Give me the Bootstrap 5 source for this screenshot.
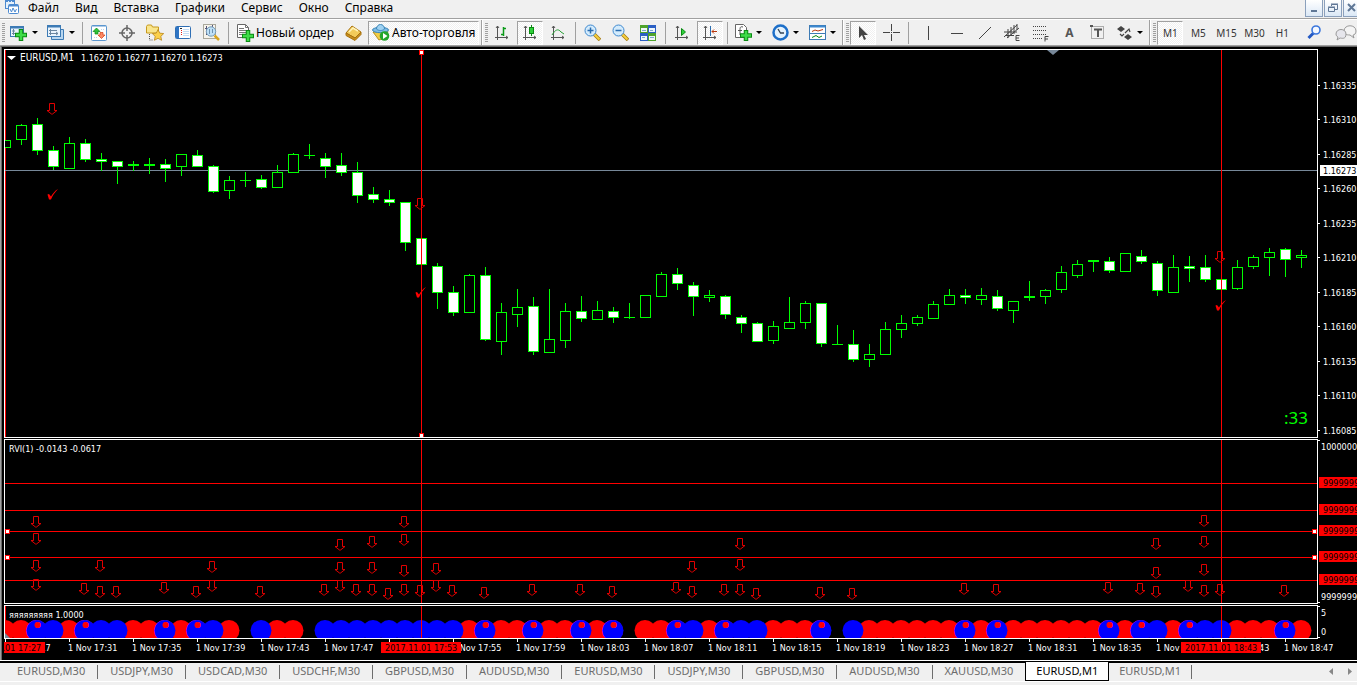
<!DOCTYPE html>
<html lang="ru">
<head>
<meta charset="utf-8">
<meta name="viewport" content="width=device-width, initial-scale=1">
<title>EURUSD,M1</title>
<link href="https://cdn.jsdelivr.net/npm/bootstrap@5.3.0/dist/css/bootstrap.min.css" rel="stylesheet">
<style>
body{background:#f0f0f0;color:#000;font:12px/16px "Noto Sans","Open Sans",sans-serif;overflow-x:hidden}
button{border:0;background:none;padding:0;color:inherit;font:inherit;white-space:nowrap}
svg{display:block;flex:none}
.menubar{height:18px;padding-left:5px}
.menubar .entry{padding:0 8px}
.winbtns{gap:1px;margin-right:-4px}
.wbtn{width:18px;height:17px;border:1px solid #8ba0bc;border-top:0;background:linear-gradient(#fff,#dbe8f6);display:flex;align-items:center;justify-content:center}
.toolbar{height:28px;border-top:1px solid #a0a0a0;border-bottom:1px solid #a0a0a0;box-shadow:inset 0 1px #fff;padding:1px 0 0 2px;overflow:hidden}
.tool{width:28px;height:24px;flex:none;display:flex;align-items:center;justify-content:center;border:1px solid transparent}
.tool.menu-tool{width:37px;gap:4px}
.tool.wide{width:auto;gap:2px;padding:0 4px}
.pressed{border-color:#a0a0a0 #fff #fff #a0a0a0;background:repeating-conic-gradient(#f0f0f0 0 25%,#fff 0 50%) 0 0/2px 2px;width:26px;margin:0 1px}
.tool.wide.pressed{padding:0 3px}
.caret{width:0;height:0;border:3px solid transparent;border-top-color:#000;border-bottom:0}
.rule{width:6px;flex:none;height:22px;background:linear-gradient(#a0a0a0,#a0a0a0) 3px 0/1px 100% no-repeat}
.grip{width:3px;height:20px;flex:none;background:repeating-linear-gradient(#a0a0a0 0 1px,#f0f0f0 1px 2px)}
.edge{width:4px;height:26px;flex:none;border-left:1px solid #a0a0a0;box-shadow:inset 1px 0 #fff;margin-left:1px}
.draw-tools{padding-left:4px}
.end-tools{gap:4px;padding-left:4px}
.tf{color:#333;font-size:10px}
.letter{font:bold 12px/14px "Noto Sans",sans-serif;color:#555}
.chartwin{border-left:1px solid #a0a0a0;border-top:1px solid #696969;background:#000;padding:2px 0 1px 3px;box-shadow:inset 1px 0 #696969}
.pane+.pane{margin-top:1px}
.plot{border:1px solid #fff;flex:1 1 0;min-width:0;width:0}
.scale{width:39px}
.chartwin svg text{font-family:"DejaVu Sans Condensed","DejaVu Sans",sans-serif;font-size:9px;fill:#fff;white-space:pre}
.chartwin svg text.sym{font-size:10px}
.chartwin svg text.ink{fill:#000}
.chartwin svg text.timer{font:17px/20px "Noto Sans",sans-serif;fill:#0f0}
.tabstrip{height:22px;border-top:1px solid #fff;box-shadow:inset 0 2px #000;padding:2px 0 0 5px;font-size:11px;color:#6d6d6d;border-bottom:1px solid #fff}
.tabstrip .tabbtn{height:14px;margin:2px 0;padding:0 12px 3px;border-right:1px solid #6d6d6d;line-height:11px}
.tabstrip .tabbtn.on{height:19px;margin:-1px 0 0 -1px;background:#fff;color:#000;border:1px solid #000;border-top:0;padding:0 10px 2px}
.tabstrip .tabbtn.on+.tabbtn{padding:0 10px 3px}
.scroller{gap:14px;padding-right:4px}
</style>
</head>
<body class="d-flex flex-column min-vh-100">
<header>
<nav class="menubar d-flex align-items-start" aria-label="Меню">
<svg width="15" height="15" viewBox="0 0 15 15" fill="none" stroke="#4d8ad0"><rect x=".5" y=".5" width="9" height="8" fill="#e6f1fb"/><path d="M1 1.500h8" stroke-dasharray="2 1"/><rect x="3.500" y="4.500" width="10" height="9" rx="1" fill="#fff"/><path d="M4 5.500h9" stroke-width="2"/><path d="M5 9l1.500 3 1.500-4 2 4 1.500-3"/></svg>
<button class="entry">Файл</button><button class="entry">Вид</button><button class="entry">Вставка</button><button class="entry">Графики</button><button class="entry">Сервис</button><button class="entry">Окно</button><button class="entry">Справка</button>
<div class="winbtns d-flex ms-auto">
<button class="wbtn" aria-label="Свернуть"><svg width="10" height="10"><path d="M2 7h6v2H2z" fill="#5f7796"/></svg></button>
<button class="wbtn" aria-label="Восстановить"><svg width="10" height="10" fill="none" stroke="#5f7796"><path d="M3.500 3V1.500h6v5H7M3 1h7" /><path d="M.5 4.500h6v4h-6zM0 4h7"/></svg></button>
<button class="wbtn" aria-label="Закрыть"><svg width="10" height="10"><path d="M1 1l7 7M8 1l-7 7" stroke="#5f7796" stroke-width="2"/></svg></button>
</div>
</nav>
<div class="toolbar d-flex align-items-center" role="toolbar" aria-label="Инструменты">
<span class="grip"></span>
<button class="tool menu-tool" aria-label="Новый график"><svg width="18" height="18"><rect x=".5" y="2.500" width="13" height="10" fill="#eaf4fd" stroke="#3d7bb5"/><path d="M1 3.500h12" stroke="#3d7bb5" stroke-width="2"/><path d="M3.500 5v6M2 9.500h5M2 7h3" stroke="#6b86a0"/><path d="M5 11h12M11 5v12" stroke="#0a8a12" stroke-width="4.500"/><path d="M6 11h10M11 6v10" stroke="#3fdc48" stroke-width="2.500"/></svg><span class="caret"></span></button>
<button class="tool menu-tool" aria-label="Профили"><svg width="18" height="18" stroke="#3d7bb5"><path d="M4.500 5.500h12v10h-12z" fill="#b9d6ef"/><rect x=".5" y="1.500" width="13" height="11" fill="#eaf4fd"/><path d="M1 2.500h12" stroke-width="2"/><path d="M3.500 5v6M2 9.500h9M9 8l2 1.500-2 1.500M2 6.500h8" stroke="#6b86a0" fill="none"/></svg><span class="caret"></span></button>
<span class="rule"></span>
<button class="tool" aria-label="Обзор рынка"><svg width="16" height="16"><rect x=".5" y=".5" width="15" height="15" rx="1" fill="#fff" stroke="#5b96cf"/><path d="M1 1h14" stroke="#5b96cf"/><path d="M3 12.500h4M10 4.500h4" stroke="#bcd3ea" stroke-dasharray="1 1"/><path d="M5.500 3L9 6.500H7V9H4V6.500H2z" fill="#2fc23e" stroke="#0a8a12" stroke-width=".7"/><path d="M10.500 13.500L7 10h2V7.500h3V10h2z" fill="#fb8a66" stroke="#d43c12" stroke-width=".7"/></svg></button>
<button class="tool" aria-label="Окно данных"><svg width="16" height="16" fill="none" stroke="#666"><circle cx="8" cy="8" r="5" stroke-width="1.500"/><path d="M8 0v6M8 10v6M0 8h6M10 8h6" stroke-width="1.500"/></svg></button>
<button class="tool" aria-label="Навигатор"><svg width="18" height="18"><path d="M.5 2.500l1-1.500h4l1 2h6v6H.5z" fill="#f9e58c" stroke="#c79a1e"/><path d="M3.500 10v6h4" stroke="#555" fill="none" stroke-dasharray="1 1"/><path d="M12 5.500l1.700 3.600 4 .5-2.900 2.700.8 4-3.600-2-3.600 2 .8-4-2.900-2.700 4-.5z" fill="#fbd04a" stroke="#b9851a" stroke-width=".8"/></svg></button>
<button class="tool" aria-label="Терминал"><svg width="16" height="16"><rect x=".5" y="1.500" width="15" height="12" rx="1" fill="#fff" stroke="#2f6fb5"/><path d="M1 2h3v11H1z" fill="#2f75c4"/><path d="M5 3.500h2" stroke="#222"/><path d="M6 5.500h1M6 7.500h1M6 9.500h1" stroke="#d22"/><path d="M8 4.500h6M8 6.500h6M8 8.500h6M8 10.500h6" stroke="#c3dcf5"/></svg></button>
<button class="tool" aria-label="Тестер"><svg width="18" height="18"><rect x="1.500" y=".5" width="12" height="14" fill="#f7f4ec" stroke="#aaa89c"/><path d="M4.500 2v9M3 4.500h3M10.500 1v4" stroke="#557"/><circle cx="9" cy="7.500" r="4.700" fill="#bfe0f7" stroke="#7499b5"/><path d="M7.500 5v5M10.500 5v4" stroke="#6d93b3"/><path d="M12.500 11.500L17 16" stroke="#d9a520" stroke-width="2.500"/></svg></button>
<span class="rule"></span>
<button class="tool wide"><svg width="18" height="18"><path d="M1.500.5h8l3 3v10h-11z" fill="#fff" stroke="#666"/><path d="M9.500.5v3h3M3 4.500h5M3 6.500h7M3 8.500h7M3 10.500h4" stroke="#777" fill="none"/><path d="M6 12h12M12 6v12" stroke="#0a8a12" stroke-width="4.500"/><path d="M7 12h10M12 7v10" stroke="#3fdc48" stroke-width="2.500"/></svg>Новый ордер</button>
<button class="tool" aria-label="MetaEditor"><svg width="17" height="16"><path d="M1 8l6-7 9 6-6 6z" fill="#f3cb5a" stroke="#a8720e"/><path d="M1 8v2.500l9 5 6-6V7l-6 6z" fill="#c98f1c" stroke="#a8720e"/><path d="M4 7l4-4 5 3" stroke="#fff3b8" fill="none" stroke-width="1.500"/></svg></button>
<button class="tool wide pressed"><svg width="18" height="18"><path d="M1 8l6 8 7-3 2-6z" fill="#f2cd46" stroke="#b8901d"/><ellipse cx="8.500" cy="6" rx="8" ry="2.700" fill="#7fbde6" stroke="#3c86b8"/><path d="M4.500 5c0-6 8-6 8 0-2 2-6 2-8 0" fill="#9fd2f2" stroke="#3c86b8"/><circle cx="12.500" cy="12" r="4.800" fill="#22a62c"/><path d="M11 9l4.500 3-4.500 3z" fill="#fff"/></svg>Авто-торговля</button>
<span class="edge"></span><span class="grip"></span>
<button class="tool" aria-label="Бары"><svg width="16" height="16" fill="none" stroke="#555"><path d="M3.500 1v14M1 12.500h13M2 3l1.500-2L5 3M12 11l2 1.500-2 1.500"/><path d="M9.500 2v9M7 9.500h2M10 3.500h2" stroke="#0a9a18" stroke-width="1.500"/></svg></button>
<button class="tool pressed" aria-label="Свечи"><svg width="16" height="16" fill="none" stroke="#555"><path d="M3.500 1v14M1 12.500h13M2 3l1.500-2L5 3M12 11l2 1.500-2 1.500"/><path d="M9.500 0v11" stroke="#0a8a12"/><rect x="7.500" y="2.500" width="4" height="6" fill="#2fd03a" stroke="#0a8a12"/></svg></button>
<button class="tool" aria-label="Линия"><svg width="16" height="16" fill="none" stroke="#555"><path d="M3.500 1v14M1 12.500h13M2 3l1.500-2L5 3M12 11l2 1.500-2 1.500"/><path d="M2 10c3-5 6-7 9-3l3 2" stroke="#27a035"/></svg></button>
<span class="rule"></span>
<button class="tool" aria-label="Увеличить"><svg width="17" height="17"><path d="M9.500 9.500L16 16" stroke="#a67a12" stroke-width="3.500"/><path d="M10 10l5.500 5.500" stroke="#f5cf3e" stroke-width="2"/><circle cx="6.500" cy="6.500" r="5.500" fill="#d3ebfc" stroke="#3d88cf"/><path d="M3.500 6.500h6M6.500 3.500v6" stroke="#2a6cb0" stroke-width="1.500"/></svg></button>
<button class="tool" aria-label="Уменьшить"><svg width="17" height="17"><path d="M9.500 9.500L16 16" stroke="#a67a12" stroke-width="3.500"/><path d="M10 10l5.500 5.500" stroke="#f5cf3e" stroke-width="2"/><circle cx="6.500" cy="6.500" r="5.500" fill="#d3ebfc" stroke="#3d88cf"/><path d="M3.500 6.500h6" stroke="#2a6cb0" stroke-width="1.500"/></svg></button>
<button class="tool" aria-label="Окна мозаикой"><svg width="16" height="16"><path d="M0 0h8v8H0zM8 8h8v8H8z" fill="#4ea32c"/><path d="M8 0h8v8H8zM0 8h8v8H0z" fill="#2b5fc4"/><path d="M1 3h6v4H1zM9 3h6v4H9zM1 11h6v4H1zM9 11h6v4H9z" fill="#eef6fb"/><path d="M2 5.500h4M10 5.500h3M2 12.500h3M10 12.500h4" stroke="#7da6c8"/></svg></button>
<span class="rule"></span>
<button class="tool" aria-label="Автопрокрутка"><svg width="16" height="16" fill="none" stroke="#555"><path d="M3.500 1v14M1 12.500h13M2 3l1.500-2L5 3M12 11l2 1.500-2 1.500"/><path d="M7.500 3.500l4 3.500-4 3.500z" fill="#2fd03a" stroke="#0a8a12"/></svg></button>
<button class="tool pressed" aria-label="Сдвиг графика"><svg width="16" height="16" fill="none" stroke="#555"><path d="M3.500 1v14M1 12.500h13M2 3l1.500-2L5 3M12 11l2 1.500-2 1.500"/><path d="M8.500 1v10" stroke="#2a6cb0"/><path d="M10 6.500h5M12 4.500L10 6.500 12 8.500" stroke="#b8360c"/></svg></button>
<span class="rule"></span>
<button class="tool menu-tool" aria-label="Индикаторы"><svg width="17" height="17"><path d="M.5.5h8l3 3v10H.5z" fill="#fff" stroke="#666"/><path d="M8 3c-3-1-3 1-3 3v5M3 6.500h4" stroke="#555" fill="none"/><path d="M5 11.500h12M11 6v11" stroke="#0a8a12" stroke-width="4.500"/><path d="M6 11.500h10M11 7v9" stroke="#3fdc48" stroke-width="2.500"/></svg><span class="caret"></span></button>
<button class="tool menu-tool" aria-label="Периоды"><svg width="17" height="17"><circle cx="8.500" cy="8.500" r="7" fill="#e4f2fd" stroke="#1d6fc9" stroke-width="2.500"/><path d="M6 5l2.500 4H12" stroke="#345" fill="none" stroke-width="1.300"/></svg><span class="caret"></span></button>
<button class="tool menu-tool" aria-label="Шаблоны"><svg width="17" height="16"><rect x=".5" y=".5" width="16" height="14" fill="#fff" stroke="#3d7bb5"/><path d="M1 1.500h15" stroke="#3d88cf" stroke-width="2"/><path d="M1 8.500h15" stroke="#3d7bb5"/><path d="M3 6.500l3-1.500 3 1 5-1.500" stroke="#b8360c" fill="none"/><path d="M3 12.500l4-2 3 2 3-1.500" stroke="#0a8a12" fill="none"/></svg><span class="caret"></span></button>
<span class="edge"></span><span class="grip"></span>
<button class="tool pressed" aria-label="Курсор"><svg width="14" height="16"><path d="M3 1v12l3-3 2 5 2-1-2-4h4z" fill="#444"/></svg></button>
<button class="tool" aria-label="Перекрестие"><svg width="17" height="17"><path d="M8.500 0v7M8.500 10v7M0 8.500h7M10 8.500h7M8 8.500h1" stroke="#444"/></svg></button>
<span class="rule"></span>
<div class="draw-tools d-flex">
<button class="tool" aria-label="Вертикальная линия"><svg width="14" height="14"><path d="M6.500 0v14" stroke="#444"/></svg></button>
<button class="tool" aria-label="Горизонтальная линия"><svg width="12" height="12"><path d="M0 6.500h12" stroke="#444"/></svg></button>
<button class="tool" aria-label="Трендовая линия"><svg width="14" height="14"><path d="M1 13L13 1" stroke="#444"/></svg></button>
<button class="tool" aria-label="Канал"><svg width="18" height="18" fill="none" stroke="#444"><path d="M0 13L13 1M3 14L15 4M0 8h13M1 11.500h9M4 5v9M7 3v9M10 1v9M13 0v6"/><path d="M15.500 11.500h-3.500v5h3.500M12 14h3"/></svg></button>
<button class="tool" aria-label="Фибоначчи"><svg width="16" height="18" fill="none" stroke="#444"><path d="M0 2.500h14M0 6.500h14M0 10.500h14M0 14.500h9" stroke-dasharray="1 1"/><path d="M15.500 12.500h-3.500v5M12 15h3"/></svg></button>
<button class="tool letter">A</button>
<button class="tool" aria-label="Метка"><svg width="15" height="15"><path d="M1.500 1.500h12v12h-12z" fill="none" stroke="#666" stroke-dasharray="1 1"/><path d="M0 0h3v2H0z" fill="#555"/><path d="M4 4.500h8M8 4.500V12" stroke="#555" stroke-width="2"/></svg></button>
<button class="tool menu-tool" aria-label="Стрелки"><svg width="16" height="14"><path d="M4 0l4 3-4 3-4-3zM11 8l4 3-4 3-4-3z" fill="#444"/><path d="M3 8l2 2 2-2M8 7l4-4 1 3" stroke="#444" fill="none" stroke-width="1.200"/></svg><span class="caret"></span></button>
</div>
<span class="edge"></span><span class="grip"></span>
<button class="tool tf pressed">M1</button><button class="tool tf">M5</button><button class="tool tf">M15</button><button class="tool tf">M30</button><button class="tool tf">H1</button>
<div class="end-tools d-flex">
<button class="tool" aria-label="Поиск"><svg width="15" height="15" fill="none"><path d="M6.500 8L1.500 13" stroke="#2459c4" stroke-width="3"/><circle cx="9" cy="5" r="4" stroke="#3a76dc" stroke-width="1.600" fill="#f4f8ff"/></svg></button>
<button class="tool" aria-label="Сообщения"><svg width="22" height="16" stroke="#999"><path d="M9 6c0-7 12-7 12 0 0 3-2 4-3 4l1 3-4-3c-4 0-6-1-6-4z" fill="#f4f4f4"/><path d="M1 9c0-6 10-6 10 0s-5 4-6 4l-3 2 1-3c-1-.5-2-1.500-2-3z" fill="#e6e6ec"/></svg></button>
</div>
</div>
</header>
<main class="chartwin">
<div class="pane d-flex"><svg id="price" class="plot" height="389"></svg><svg id="priceScale" class="scale" height="389"></svg></div>
<div class="pane d-flex"><svg id="rvi" class="plot" height="165"></svg><svg id="rviScale" class="scale" height="165"></svg></div>
<div class="pane d-flex"><svg id="dots" class="plot" height="34"></svg><svg id="dotScale" class="scale" height="34"></svg></div>
<svg id="dates" width="100%" height="20"></svg>
</main>
<nav class="tabstrip d-flex" aria-label="Графики">
<button class="tabbtn">EURUSD,M30</button><button class="tabbtn">USDJPY,M30</button><button class="tabbtn">USDCAD,M30</button><button class="tabbtn">USDCHF,M30</button><button class="tabbtn">GBPUSD,M30</button><button class="tabbtn">AUDUSD,M30</button><button class="tabbtn">EURUSD,M30</button><button class="tabbtn">USDJPY,M30</button><button class="tabbtn">GBPUSD,M30</button><button class="tabbtn">AUDUSD,M30</button><button class="tabbtn">XAUUSD,M30</button><button class="tabbtn on">EURUSD,M1</button><button class="tabbtn">EURUSD,M1</button>
<div class="scroller d-flex ms-auto align-items-center">
<button aria-label="Назад"><svg width="5" height="8"><path d="M4 0v7L0 3.500z" fill="#888"/></svg></button>
<button aria-label="Вперёд"><svg width="5" height="8"><path d="M0 0v7l4-3.500z" fill="#888"/></svg></button>
</div>
</nav>
<script src="https://cdn.jsdelivr.net/npm/bootstrap@5.3.0/dist/js/bootstrap.bundle.min.js"></script>
<script>
const G='#0f0',R='#f00',STEP=16;
const box=(x,y,w,h,f)=>`<rect x="${x}" y="${y}" width="${w}" height="${h}" fill="${f}"/>`;
const label=(x,y,t,c='')=>`<text x="${x}" y="${y}" class="${c}">${t}</text>`;
// chart space: x and y count from the window corner, each panel shows its own slice
const slice=(id,x,y,s,extra='')=>{document.getElementById(id).innerHTML=`<svg x="${-x}" y="${-y}" overflow="visible">${s}</svg>${extra}`};
const arrow=(x,y)=>`<path transform="translate(${x} ${y})" d="M-2.500 .5H2.500V7.500H5L.5 11H-.5L-5 7.500H-2.500Z" fill="none" stroke="#e00000"/>`;
const tick=(x,y)=>`<path transform="translate(${x} ${y})" d="M-4.500 5.500l1.500-.5 2 2.500c2-3 3.500-5.500 7-7.500-3.500 4-5 6-7 10.500h-2z" fill="#f00"/>`;
const knob=(x,y)=>box(x-2,y-2,5,5,R)+box(x-1,y-1,3,3,'#fff');
// candles from x=5: high, body top, body bottom, low, falling
const bars=[[140,140,148,148,0],[124,125,140,145,0],[118,124,151,155,1],[146,150,167,170,1],[137,143,169,169,0],[139,143,160,162,1],[153,159,162,171,1],[161,161,167,184,1],[161,164,166,171,0],[158,164,166,174,0],[159,164,169,182,1],[154,154,167,176,0],[150,155,167,167,1],[165,166,192,193,1],[176,180,191,199,0],[172,180,181,187,0],[175,179,188,189,1],[165,172,188,188,0],[153,154,173,173,0],[144,155,156,159,0],[153,158,167,178,1],[153,165,173,176,1],[162,172,196,203,1],[187,194,200,203,1],[190,199,203,206,1],[202,202,243,251,1],[238,238,265,265,1],[263,266,293,309,1],[286,292,313,316,1],[274,275,313,313,0],[267,275,340,341,1],[303,312,342,355,0],[289,307,315,327,0],[297,306,352,355,1],[289,339,353,353,0],[303,311,341,348,0],[296,311,319,322,1],[301,310,320,320,0],[307,311,318,323,1],[303,317,318,319,0],[295,295,318,318,0],[272,274,297,297,0],[268,274,284,290,1],[282,285,297,316,1],[290,295,298,302,0],[295,296,315,319,1],[315,317,324,333,1],[322,323,342,342,1],[321,326,341,344,0],[297,322,329,329,0],[301,303,323,329,0],[303,303,344,347,1],[325,344,345,345,0],[330,344,360,362,1],[344,354,360,367,0],[322,329,355,355,0],[315,323,330,338,0],[315,317,324,326,0],[301,304,319,319,0],[289,295,305,305,0],[289,295,298,304,1],[288,295,300,305,0],[290,296,309,311,1],[301,301,311,323,0],[281,296,298,301,0],[289,290,297,304,0],[266,272,290,293,0],[260,264,276,278,0],[260,260,262,272,0],[257,261,271,273,1],[253,253,272,272,0],[250,256,262,264,1],[261,263,291,296,1],[255,267,293,293,0],[256,266,269,282,1],[255,267,280,282,1],[279,279,290,290,1],[260,267,289,290,0],[255,257,267,269,0],[248,252,258,276,0],[248,249,260,277,1],[250,255,258,268,0]];
let s=box(5,50,1,400,R)+box(5,170,'100%',1,'#778899');
bars.forEach(([h,t,b,l,f],i)=>{const x=5+i*STEP;s+=box(x,h,1,l-h,G)+box(x-5,t,11,b-t,G);if(b-t>2)s+=box(x-4,t+1,9,b-t-2,f?'#fff':'#000')});
s+=box(421,50,1,400,R)+box(1221,50,1,400,R)+knob(421,52)+knob(421,435);
[[52,103],[420,198],[1220,251]].forEach(p=>s+=arrow(...p));
[[52,189],[420,287],[1220,300]].forEach(p=>s+=tick(...p));
s+='<path d="M1047 50h12l-6 5z" fill="#778899"/><path d="M7 56h9l-4.500 4z" fill="#fff"/>';
s+=label(20,61,'EURUSD,M1','sym')+label(81,61,'1.16270 1.16277 1.16270 1.16273')+label(1284,424,':33','timer');
slice('price',5,50,s);
s='';
['1.16335','1.16310','1.16285','1.16260','1.16235','1.16210','1.16185','1.16160','1.16135','1.16110','1.16085'].forEach((t,i)=>{const y=Math.floor(85+i*34.5);s+=box(0,y,2,1,'#fff')+label(5,y+4,t)});
s+=box(2,165,37,11,'#fff')+label(5,174,'1.16273','ink');
slice('priceScale',0,49,s);
s='';
const levels=[483,510,531,557,580];
levels.forEach(y=>s+=box(5,y,'100%',1,R));
s+=box(421,440,1,200,R)+box(1221,440,1,200,R)+knob(7,531)+knob(7,557)+label(9,452,'RVI(1) -0.0143 -0.0617');
const marks={36:[516,533,560,579],84:[583],100:[560,586],116:[586],164:[582],196:[586],212:[561,580],260:[586],324:[584],340:[539,562,580],356:[584],372:[536,562,584],388:[588],404:[516,534,565,584],420:[585],436:[563,580],452:[585],484:[587],532:[584],580:[584],612:[586],676:[582],692:[561,586],724:[584],740:[538,559,584],756:[588],820:[587],852:[588],964:[583],996:[584],1108:[582],1140:[583],1156:[538,567,586],1188:[580],1204:[515,536,564,585],1220:[584],1284:[585]};
for(const x in marks)marks[x].forEach(y=>s+=arrow(x,y));
slice('rvi',5,440,s,`<svg x="100%" y="-440" overflow="visible">${knob(-3,531)+knob(-3,557)}</svg>`);
s=box(0,440,2,1,'#fff')+box(0,602,2,1,'#fff')+label(3,450,'10000000')+label(3,600,'99999999');
levels.forEach(y=>s+=box(1,y-6,38,11,R)+label(5,y+3,'9999999','ink'));
slice('rviScale',0,439,s);
// R = red, B = blue, D = blue with a red pip, dot = gap
const row='RRDBRDBBRRDRDBR.BRR.BBBBBBBBBRDRRDRRDRD.RRDBRDBBRRRD.BRRRRRRDRDRRRRRRDRDBRDBBRRRDR';
let red='',blue='',pip='';
[...row].forEach((c,i)=>{const x=5+i*STEP,y=630.5,o=(cx,r,cy,f)=>`<circle cx="${cx}" cy="${cy}" r="${r}" fill="${f}"/>`;
if(c=='R')red+=o(x,10.5,y,R);
if(c=='D'){blue+=o(x-.5,10.5,y,'#f0f');pip+=o(x+1,3,625,'#f0f')+o(x+.5,3,625,R)}
if(c=='B'||c=='D')blue+=o(x,10.5,y,'#00f')});
slice('dots',5,606,box(5,606,1,40,R)+red+blue+pip+box(421,606,1,40,R)+box(1221,606,1,40,R)+'<path d="M5 633l5 5H5z" fill="#778899"/>'+label(9,618,'яяяяяяяяя 1.0000'));
slice('dotScale',0,605,box(0,606,2,1,'#fff')+box(0,637,2,1,'#fff')+label(3,616,'5')+label(3,635,'0'));
s='';
for(let i=0;i<21;i++){const x=5+i*64,m=27+i*4,t=`${17+Math.floor(m/60)}:${String(m%60).padStart(2,'0')}`;
s+=box(x,639,1,3,'#fff');
if(i!=6)s+=label(x-1,651,'1 Nov '+(i?t:'2017'))}
[[-35,'17:27'],[381,'17:53'],[1181,'18:43']].forEach(([x,t])=>s+=box(x,642,80,11,R)+label(x+4,651,'2017.11.01 '+t,'ink'));
slice('dates',4,639,s);
</script>
</body>
</html>
